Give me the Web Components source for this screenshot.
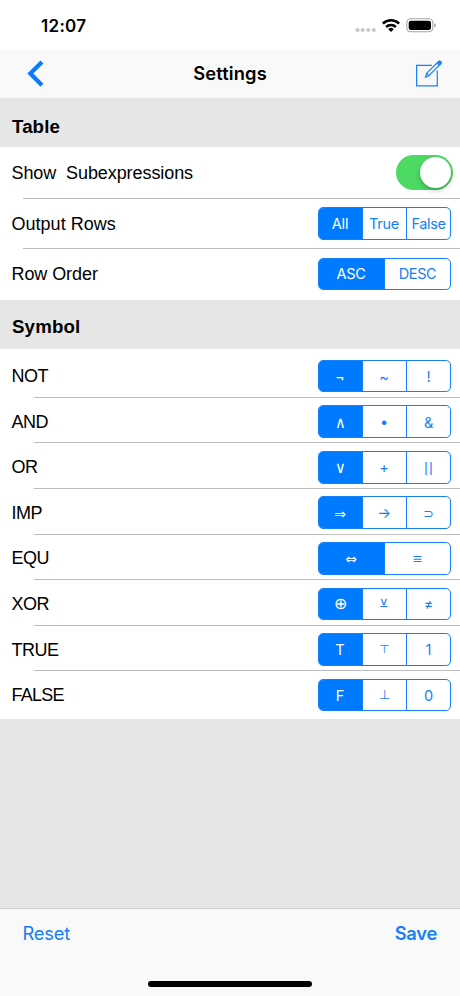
<!DOCTYPE html>
<html lang="en">
<head>
<meta charset="utf-8">
<title>Settings</title>
<style>
html,body{margin:0;height:100%}
body{font-family:Inter,"Liberation Sans",sans-serif;color:#000;background:#fff;overflow:hidden}
</style>
</head>
<body>
<settings-app></settings-app>
<script>
const define = (name, html, init) => {
  const template = document.createElement('template');
  template.innerHTML = html;
  customElements.define(name, class extends HTMLElement {
    connectedCallback() {
      if (this.shadowRoot) return;
      this.attachShadow({mode: 'open'}).append(template.content.cloneNode(true));
      if (init) init(this, this.shadowRoot);
    }
  });
};

define('status-bar', `<style>
:host{display:flex;height:50px;box-sizing:border-box;padding:0 24px 0 41px;align-items:center;background:#fff}
time{flex:1;font-size:17px;font-weight:600;line-height:22px;letter-spacing:.3px;padding-top:1px}
svg{display:block}
</style><time>12:07</time>
<svg width="82" height="50" viewBox="354 0 82 50">
<g fill="#c9c9c9"><circle cx="357.5" cy="30" r="2.1"/><circle cx="362.7" cy="30" r="2.1"/><circle cx="368.3" cy="30" r="2.1"/><circle cx="373.8" cy="30" r="2.1"/></g>
<g fill="none" stroke="#000" stroke-width="2.6"><path d="M382.9 23.6a11.6 11.6 0 0 1 16.2 0"/><path d="M386.1 27a7 7 0 0 1 9.8 0"/></g>
<path d="M388.2 29.2a4 4 0 0 1 5.6 0L391 32z"/>
<rect x="406.8" y="18.8" width="26" height="13" rx="3.8" fill="none" stroke="#a6a6a6" stroke-width="1.1"/>
<rect x="408.7" y="20.7" width="22.3" height="9.3" rx="2.2"/>
<path d="M434.2 23.2q1.7.7 1.7 2.1t-1.7 2.1z" fill="#a6a6a6"/>
</svg>`);

define('nav-bar', `<style>
:host{display:grid;grid-template-columns:60px 1fr 60px;height:48px;align-items:center;background:#f9f9f9}
h1{margin:0;text-align:center;font-size:18.3px;font-weight:600;line-height:24px;letter-spacing:.15px;padding-bottom:2px}
svg{display:block}
</style>
<svg width="60" height="48" viewBox="0 50 60 48"><path d="M42 61.9 30.3 73.5 42 85.2" fill="none" stroke="#0a7aff" stroke-width="4.2"/></svg>
<h1><slot></slot></h1>
<svg width="60" height="48" viewBox="400 50 60 48" fill="none" stroke="#187fff" stroke-width="1.2"><path d="M432 65.4H416.6V85.8H437.3V70.5"/><path d="M425.5 77.1 426.6 73.2 438.8 61.3Q439.7 60.7 440.6 61.5 442 62.7 441 63.7L428.8 75.7Z"/><path d="M437 63.1 439.3 65.5M426.6 73.2 428.8 75.7" /><path d="M438.2 62.2 439.2 61.3 441.1 63.1 440 64.2z" fill="#187fff"/></svg>`);

define('settings-section', `<style>
:host{display:block}
h2{margin:0;height:49px;box-sizing:border-box;padding:var(--head-top,9px) 12px 0;background:#e6e6e6;font:bold 18.7px/40px "Liberation Sans",sans-serif;letter-spacing:var(--head-ls,.1px)}
div{background:#fff;padding:var(--body-pad,0)}
</style><h2></h2><div><slot></slot></div>`, (el, root) => root.querySelector('h2').textContent = el.getAttribute('heading'));

define('settings-row', `<style>
:host{display:flex;flex-direction:column;height:var(--row,50px)}
.line{flex:1;min-height:0;display:flex;align-items:center;justify-content:space-between;padding:var(--row-pad,0) var(--right,9px) 0 11.5px}
.label{font:18px/24px "Liberation Sans",sans-serif;white-space:pre;letter-spacing:var(--ls,-.08px);padding-top:var(--label-top,1px)}
hr{flex:none;margin:0 0 0 var(--inset,23px);border:0;height:1px;background:#bebec0}
:host([last]) hr{display:none}
:host([last]) .line{margin-bottom:1px}
</style><div class="line"><span class="label"></span><slot></slot></div><hr>`, (el, root) => root.querySelector('.label').textContent = el.getAttribute('label'));

define('toggle-switch', `<style>
:host{display:flex;width:57px;height:34.5px;box-sizing:border-box;padding:1.8px;border-radius:18px;background:#4cd964;justify-content:flex-end}
i{width:31px;height:31px;border-radius:50%;background:#fff;box-shadow:0 3px 6px rgba(0,0,0,.15),0 2px 2px rgba(0,0,0,.12)}
</style><i></i>`);

define('segmented-control', `<style>
:host{display:flex;width:133px;height:32.6px;box-sizing:border-box;border:1.2px solid #1580f7;border-radius:5px;overflow:hidden;background:#fff}
</style><slot></slot>`);

define('segment-option', `<style>
:host{flex:1 1 0;min-width:0;box-sizing:border-box;display:flex;align-items:center;justify-content:center;border-left:1.2px solid #1580f7;color:#177ff5;white-space:nowrap;font:var(--fs,14.5px)/20px Inter,"DejaVu Sans",sans-serif;letter-spacing:var(--sls,-.1px)}
:host(:first-child){border-left-width:0;flex:0 0 43px}
:host(:first-child:nth-last-child(2)){flex-basis:65px}
:host([selected]){background:#007aff;color:#fff}
:host([kind=math]){font-family:"DejaVu Sans",sans-serif;font-weight:400;letter-spacing:0}
:host([kind=thin]){font-family:"DejaVu Sans",sans-serif;font-weight:200;letter-spacing:0}
span{display:block;transform:translate(var(--dx,-.5px),var(--dy,.5px)) scale(var(--sx,1),var(--sy,1))}
:host(:last-child) span{transform:translate(0,var(--dy,.5px)) scale(var(--sx,1),var(--sy,1))}
</style><span><slot></slot></span>`);

define('tool-bar', `<style>
:host{display:flex;flex-direction:column;height:88px;box-sizing:border-box;border-top:1px solid #d0d0d0;background:#f9f9f9;padding:11px 23px 9px;color:#147efb}
div{display:flex;justify-content:space-between;font-size:18.3px;line-height:26px}
span{letter-spacing:-.15px;margin-left:-.5px}
b{font-weight:600;letter-spacing:-.25px}
i{display:block;width:164px;height:5.6px;border-radius:3px;background:#000;margin:auto auto 0}
</style><div><span>Reset</span><b>Save</b></div><i></i>`);

define('settings-app', `<style>
:host{display:flex;flex-direction:column;height:996px;background:#e6e6e6}
main{flex:1;min-height:0}
.table{--row:50.2px;--inset:23px}
.symbol{--row:45.57px;--inset:34px;--row-pad:3px;--body-pad:3px 0 2.4px;--ls:-.5px;--head-top:7px;--head-ls:.15px;--label-top:.3px}
.wide{--sls:-.35px;--dy:0px}
.wedge{--fs:13.5px;--sx:1.12;--sy:1.22;--dy:-.5px}
</style>
<status-bar></status-bar>
<nav-bar>Settings</nav-bar>
<main>
<settings-section class="table" heading="Table">
<settings-row label="Show  Subexpressions" style="--row:51.8px;--right:7px"><toggle-switch></toggle-switch></settings-row>
<settings-row label="Output Rows" style="--row:50px;--ls:.02px;--label-top:2px"><segmented-control><segment-option selected style="--dy:1px">All</segment-option><segment-option style="--sls:-.3px;--dy:1px">True</segment-option><segment-option style="--sls:-.4px;--dy:1px">False</segment-option></segmented-control></settings-row>
<settings-row label="Row Order" last style="--row:51.5px;--label-top:0px"><segmented-control><segment-option selected class="wide">ASC</segment-option><segment-option class="wide">DESC</segment-option></segmented-control></settings-row>
</settings-section>
<settings-section class="symbol" heading="Symbol">
<settings-row label="NOT"><segmented-control><segment-option selected style="--fs:16px">¬</segment-option><segment-option>~</segment-option><segment-option>!</segment-option></segmented-control></settings-row>
<settings-row label="AND"><segmented-control><segment-option selected kind="thin" class="wedge">∧</segment-option><segment-option style="--dy:-.5px">•</segment-option><segment-option>&amp;</segment-option></segmented-control></settings-row>
<settings-row label="OR"><segmented-control><segment-option selected kind="thin" class="wedge">∨</segment-option><segment-option>+</segment-option><segment-option style="--sy:.75;--dy:1.5px;--sls:.2px">||</segment-option></segmented-control></settings-row>
<settings-row label="IMP"><segmented-control><segment-option selected kind="math" style="--fs:14px">⇒</segment-option><segment-option style="--dy:-.5px">→</segment-option><segment-option kind="math" style="--fs:12.5px;--dy:1px">⊃</segment-option></segmented-control></settings-row>
<settings-row label="EQU"><segmented-control><segment-option selected kind="math" style="--fs:14px">⇔</segment-option><segment-option kind="math" style="--fs:12.5px">≡</segment-option></segmented-control></settings-row>
<settings-row label="XOR"><segmented-control><segment-option selected kind="thin" style="--fs:15.5px;--dy:0px">⊕</segment-option><segment-option kind="thin" style="--fs:13px;--sy:.85;--dy:0px">⊻</segment-option><segment-option style="--dy:-.5px">≠</segment-option></segmented-control></settings-row>
<settings-row label="TRUE"><segmented-control><segment-option selected>T</segment-option><segment-option kind="thin" style="--fs:12.5px;--sy:.9">⊤</segment-option><segment-option>1</segment-option></segmented-control></settings-row>
<settings-row label="FALSE" last style="--ls:-.75px"><segmented-control><segment-option selected>F</segment-option><segment-option kind="thin" style="--fs:12.5px;--dy:0px">⊥</segment-option><segment-option>0</segment-option></segmented-control></settings-row>
</settings-section>
</main>
<tool-bar></tool-bar>`);
</script>
</body>
</html>
